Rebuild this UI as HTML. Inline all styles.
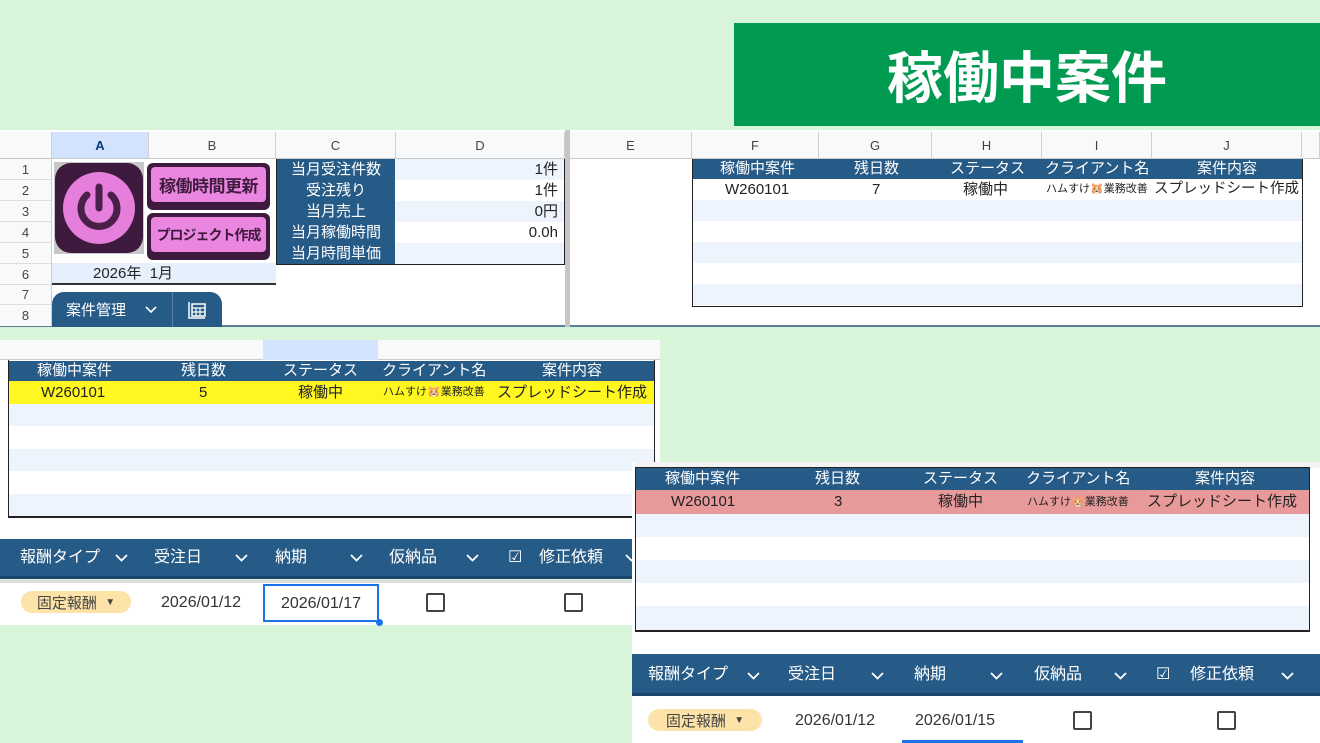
<!DOCTYPE html><html><head><meta charset="utf-8"><style>
*{margin:0;padding:0;box-sizing:border-box}
body{width:1320px;height:743px;background:#d8f5da;position:relative;overflow:hidden;font-family:"Liberation Sans","Noto Sans CJK JP",sans-serif;color:#222}
.a{position:absolute;white-space:nowrap}
.c{display:flex;align-items:center;justify-content:center;white-space:nowrap}
.hd{background:#f8f9fa;border-right:1px solid #d0d0d0;border-bottom:1px solid #c8c8c8;font-size:13px;color:#444}
.bl{background:#265a87;color:#fff}
.lb{background:#edf4fd}
.ch{position:absolute;top:15px}
</style></head><body>
<div class="a c" style="left:734px;top:23px;width:586px;height:103px;background:#009a50;color:#fff;font-size:56px;font-weight:bold;letter-spacing:0px">稼働中案件</div>

<!-- top sheet -->
<div class="a" style="left:0;top:130px;width:1320px;height:197px;background:#fff;border-bottom:2px solid #5a7f99"></div>
<div class="a hd c" style="left:0;top:132px;width:52px;height:27px"></div>
<div class="a hd c" style="left:52px;top:132px;width:97px;height:27px;background:#d3e3fd;font-weight:bold;color:#0b3c77">A</div>
<div class="a hd c" style="left:149px;top:132px;width:127px;height:27px">B</div>
<div class="a hd c" style="left:276px;top:132px;width:120px;height:27px">C</div>
<div class="a hd c" style="left:396px;top:132px;width:169px;height:27px">D</div>
<div class="a" style="left:565px;top:130px;width:5px;height:197px;background:#c6c6c6"></div>
<div class="a hd c" style="left:570px;top:132px;width:122px;height:27px">E</div>
<div class="a hd c" style="left:692px;top:132px;width:127px;height:27px">F</div>
<div class="a hd c" style="left:819px;top:132px;width:113px;height:27px">G</div>
<div class="a hd c" style="left:932px;top:132px;width:110px;height:27px">H</div>
<div class="a hd c" style="left:1042px;top:132px;width:110px;height:27px">I</div>
<div class="a hd c" style="left:1152px;top:132px;width:150px;height:27px">J</div>
<div class="a hd" style="left:1302px;top:132px;width:18px;height:27px"></div>
<div class="a" style="left:0;top:159px;width:52px;height:167px;background:#f8f9fa;border-right:1px solid #ccc;font-size:13px;color:#444">
<div class="c" style="height:21px;border-bottom:1px solid #ddd">1</div><div class="c" style="height:21px;border-bottom:1px solid #ddd">2</div><div class="c" style="height:21px;border-bottom:1px solid #ddd">3</div><div class="c" style="height:21px;border-bottom:1px solid #ddd">4</div><div class="c" style="height:21px;border-bottom:1px solid #ddd">5</div><div class="c" style="height:21px;border-bottom:1px solid #ddd">6</div><div class="c" style="height:20px;border-bottom:1px solid #ddd">7</div><div class="c" style="height:20px">8</div></div>
<!-- power icon -->
<div class="a" style="left:54px;top:162px;width:90px;height:92px;background:#c7c9c9"></div>
<div class="a c" style="left:55px;top:163px;width:88px;height:90px;background:#3e1b3e;border-radius:16px">
<svg width="76" height="76" viewBox="0 0 76 76"><circle cx="38" cy="38" r="36" fill="#e57fdb"/><path d="M26 25 A18 18 0 1 0 50 25" fill="none" stroke="#4a1f4a" stroke-width="7" stroke-linecap="round"/><line x1="38" y1="17" x2="38" y2="38" stroke="#4a1f4a" stroke-width="7" stroke-linecap="round"/></svg></div>
<div class="a c" style="left:147px;top:163px;width:123px;height:47px;background:#3e1b3e;border-radius:6px"><div class="c" style="width:115px;height:35px;background:#ea86df;border-radius:4px;font-weight:bold;font-size:17px;color:#3e1b3e;margin-top:-4px;letter-spacing:-0.5px">稼働時間更新</div></div>
<div class="a c" style="left:147px;top:213px;width:123px;height:47px;background:#3e1b3e;border-radius:6px"><div class="c" style="width:115px;height:35px;background:#ea86df;border-radius:4px;font-weight:bold;font-size:14px;color:#3e1b3e;margin-top:-4px;letter-spacing:-1px">プロジェクト作成</div></div>
<div class="a" style="left:52px;top:263px;width:224px;height:22px;background:#e6f0fc;border-bottom:2px solid #333;font-size:15px;padding-left:41px;line-height:22px">2026年&nbsp; 1月</div>
<!-- tab -->
<div class="a" style="left:52px;top:292px;width:170px;height:35px;background:#265a87;border-radius:12px 12px 0 0"></div>
<div class="a" style="left:66px;top:299px;color:#fff;font-size:15px">案件管理</div>
<svg class="a" style="left:145px;top:306px" width="12" height="8" viewBox="0 0 12 8"><path d="M1 1l5 5 5-5" fill="none" stroke="#fff" stroke-width="1.6"/></svg>
<div class="a" style="left:172px;top:292px;width:1px;height:35px;background:#5a80a6"></div>
<svg class="a" style="left:186px;top:300px" width="22" height="20" viewBox="0 0 22 20"><path d="M3 2v16h16" fill="none" stroke="#fff" stroke-width="1.5"/><rect x="6" y="4" width="13" height="12" fill="none" stroke="#fff" stroke-width="1.5"/><path d="M6 8h13M10 8v8M14 8v8M6 12h13" stroke="#fff" stroke-width="1.2"/></svg>
<!-- summary C/D -->
<div class="a" style="left:276px;top:159px;width:289px;height:106px;border:1px solid #222;border-top:none"></div>
<div class="a bl" style="left:277px;top:159px;width:118px;height:105px;font-size:15px;line-height:21px;text-align:center">当月受注件数<br>受注残り<br>当月売上<br>当月稼働時間<br>当月時間単価</div>
<div class="a" style="left:395px;top:159px;width:169px;font-size:15px;line-height:21px;text-align:right">
<div class="lb" style="padding-right:6px">1件</div><div style="padding-right:6px">1件</div><div class="lb" style="padding-right:6px">0円</div><div style="padding-right:6px">0.0h</div><div class="lb" style="height:21px"></div></div>
<!-- F-J table -->
<div class="a" style="left:692px;top:159px;width:611px;height:148px;border:1px solid #222;border-top:none;background:#fff"></div>
<div class="a bl" style="left:693px;top:159px;width:609px;height:20px;font-size:15px;line-height:20px">
<span class="a" style="left:27px">稼働中案件</span><span class="a" style="left:161px">残日数</span><span class="a" style="left:257px">ステータス</span><span class="a" style="left:352px">クライアント名</span><span class="a" style="left:504px">案件内容</span></div>
<div class="a" style="left:693px;top:179px;width:609px;height:21px;font-size:15px;line-height:21px">
<span class="a" style="left:32px">W260101</span><span class="a" style="left:179px">7</span><span class="a" style="left:270px">稼働中</span><span class="a" style="left:353px;font-size:11px">ハムすけ🐹業務改善</span><span class="a" style="left:461px;font-size:14.5px">スプレッドシート作成</span></div>
<div class="a lb" style="left:693px;top:200px;width:609px;height:21px"></div>
<div class="a lb" style="left:693px;top:242px;width:609px;height:21px"></div>
<div class="a lb" style="left:693px;top:284px;width:609px;height:21px"></div>

<!-- middle-left panel -->
<div class="a" style="left:0;top:340px;width:660px;height:200px;background:#fff"></div>
<div class="a" style="left:0;top:340px;width:660px;height:20px;background:#f8f9fa;border-bottom:1px solid #ccc"></div>
<div class="a" style="left:263px;top:340px;width:115px;height:20px;background:#d3e3fd"></div>
<div class="a" style="left:8px;top:360px;width:647px;height:158px;border:1px solid #222;border-top:none;border-bottom:2px solid #222"></div>
<div class="a bl" style="left:9px;top:361px;width:645px;height:20px;font-size:15px;line-height:20px">
<span class="a" style="left:28px">稼働中案件</span><span class="a" style="left:172px">残日数</span><span class="a" style="left:274px">ステータス</span><span class="a" style="left:373px">クライアント名</span><span class="a" style="left:533px">案件内容</span></div>
<div class="a" style="left:9px;top:381px;width:645px;height:23px;background:#fff71f;font-size:15px;line-height:23px">
<span class="a" style="left:32px">W260101</span><span class="a" style="left:190px">5</span><span class="a" style="left:289px">稼働中</span><span class="a" style="left:374px;font-size:11px">ハムすけ🐹業務改善</span><span class="a" style="left:488px">スプレッドシート作成</span></div>
<div class="a lb" style="left:9px;top:404px;width:645px;height:22px"></div>
<div class="a lb" style="left:9px;top:449px;width:645px;height:22px"></div>
<div class="a lb" style="left:9px;top:494px;width:645px;height:22px"></div>
<div class="a bl" style="left:0;top:539px;width:632px;height:40px;border-bottom:3px solid #1b4569;font-size:16px;line-height:38px;overflow:hidden">
<span class="a" style="left:20px">報酬タイプ</span><span class="a" style="left:154px">受注日</span><span class="a" style="left:275px">納期</span><span class="a" style="left:389px">仮納品</span><span class="a" style="left:508px">☑</span><span class="a" style="left:539px">修正依頼</span>
<svg class="ch" style="left:115px" width="13" height="8" viewBox="0 0 13 8"><path d="M1 1l5.5 5.5L12 1" fill="none" stroke="#fff" stroke-width="1.8"/></svg>
<svg class="ch" style="left:235px" width="13" height="8" viewBox="0 0 13 8"><path d="M1 1l5.5 5.5L12 1" fill="none" stroke="#fff" stroke-width="1.8"/></svg>
<svg class="ch" style="left:350px" width="13" height="8" viewBox="0 0 13 8"><path d="M1 1l5.5 5.5L12 1" fill="none" stroke="#fff" stroke-width="1.8"/></svg>
<svg class="ch" style="left:466px" width="13" height="8" viewBox="0 0 13 8"><path d="M1 1l5.5 5.5L12 1" fill="none" stroke="#fff" stroke-width="1.8"/></svg>
<svg class="ch" style="left:625px" width="13" height="8" viewBox="0 0 13 8"><path d="M1 1l5.5 5.5L12 1" fill="none" stroke="#fff" stroke-width="1.8"/></svg>
</div>
<div class="a" style="left:0;top:580px;width:632px;height:45px;background:#fff;border-top:3px solid #ddd"></div>
<div class="a c" style="left:21px;top:591px;width:110px;height:22px;background:#fde3a7;border-radius:11px;font-size:15px;color:#444">固定報酬 &nbsp;<span style="font-size:10px">▼</span></div>
<div class="a" style="left:161px;top:594px;font-size:16px;color:#333">2026/01/12</div>
<div class="a c" style="left:263px;top:584px;width:116px;height:38px;border:2px solid #1a73e8;font-size:16px;color:#333;padding-top:2px">2026/01/17</div>
<div class="a" style="left:376px;top:619px;width:7px;height:7px;border-radius:50%;background:#1a73e8"></div>
<div class="a" style="left:426px;top:593px;width:19px;height:19px;border:2px solid #444;border-radius:2px"></div>
<div class="a" style="left:564px;top:593px;width:19px;height:19px;border:2px solid #444;border-radius:2px"></div>

<!-- bottom-right panel -->
<div class="a" style="left:632px;top:462px;width:688px;height:281px;background:#fff"></div>
<div class="a" style="left:635px;top:462px;width:685px;height:6px;background:#f3f3f3"></div>
<div class="a" style="left:635px;top:467px;width:675px;height:165px;border:1px solid #222;border-bottom:2px solid #222"></div>
<div class="a bl" style="left:636px;top:468px;width:673px;height:22px;font-size:15px;line-height:22px">
<span class="a" style="left:29px">稼働中案件</span><span class="a" style="left:179px">残日数</span><span class="a" style="left:287px">ステータス</span><span class="a" style="left:390px">クライアント名</span><span class="a" style="left:559px">案件内容</span></div>
<div class="a" style="left:636px;top:490px;width:673px;height:24px;background:#e89a9a;font-size:15px;line-height:24px">
<span class="a" style="left:35px">W260101</span><span class="a" style="left:198px">3</span><span class="a" style="left:302px">稼働中</span><span class="a" style="left:391px;font-size:11px">ハムすけ🐹業務改善</span><span class="a" style="left:511px">スプレッドシート作成</span></div>
<div class="a lb" style="left:636px;top:514px;width:673px;height:23px"></div>
<div class="a lb" style="left:636px;top:560px;width:673px;height:23px"></div>
<div class="a lb" style="left:636px;top:606px;width:673px;height:24px"></div>
<div class="a bl" style="left:632px;top:654px;width:688px;height:42px;border-bottom:3px solid #1b4569;font-size:16px;line-height:42px">
<span class="a" style="left:16px">報酬タイプ</span><span class="a" style="left:156px">受注日</span><span class="a" style="left:282px">納期</span><span class="a" style="left:402px">仮納品</span><span class="a" style="left:524px">☑</span><span class="a" style="left:558px">修正依頼</span>
<svg class="ch" style="left:115px;top:18px" width="13" height="8" viewBox="0 0 13 8"><path d="M1 1l5.5 5.5L12 1" fill="none" stroke="#fff" stroke-width="1.8"/></svg>
<svg class="ch" style="left:239px;top:18px" width="13" height="8" viewBox="0 0 13 8"><path d="M1 1l5.5 5.5L12 1" fill="none" stroke="#fff" stroke-width="1.8"/></svg>
<svg class="ch" style="left:358px;top:18px" width="13" height="8" viewBox="0 0 13 8"><path d="M1 1l5.5 5.5L12 1" fill="none" stroke="#fff" stroke-width="1.8"/></svg>
<svg class="ch" style="left:482px;top:18px" width="13" height="8" viewBox="0 0 13 8"><path d="M1 1l5.5 5.5L12 1" fill="none" stroke="#fff" stroke-width="1.8"/></svg>
<svg class="ch" style="left:649px;top:18px" width="13" height="8" viewBox="0 0 13 8"><path d="M1 1l5.5 5.5L12 1" fill="none" stroke="#fff" stroke-width="1.8"/></svg>
</div>
<div class="a c" style="left:648px;top:709px;width:114px;height:22px;background:#fde3a7;border-radius:11px;font-size:15px;color:#444">固定報酬 &nbsp;<span style="font-size:10px">▼</span></div>
<div class="a" style="left:795px;top:712px;font-size:16px;color:#333">2026/01/12</div>
<div class="a" style="left:915px;top:712px;font-size:16px;color:#333">2026/01/15</div>
<div class="a" style="left:902px;top:740px;width:121px;height:3px;background:#1a73e8"></div>
<div class="a" style="left:1073px;top:711px;width:19px;height:19px;border:2px solid #444;border-radius:2px"></div>
<div class="a" style="left:1217px;top:711px;width:19px;height:19px;border:2px solid #444;border-radius:2px"></div>
</body></html>
